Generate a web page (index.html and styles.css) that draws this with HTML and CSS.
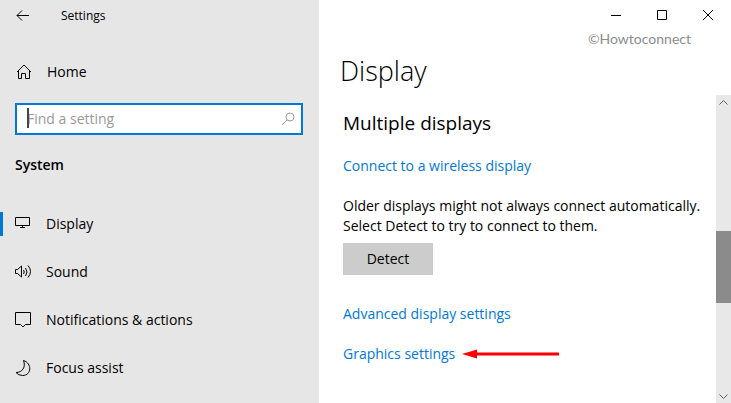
FILE: index.html
```
<!DOCTYPE html>
<html lang="en">
<head>
    <meta charset="UTF-8">
    <title>Settings</title>
    <link rel="stylesheet" href="styles.css">
</head>
<body>
<div class="window">
    <div class="sidebar">
        <div class="titlebar">
            <button class="back" aria-label="Back">
                <svg width="14" height="12" viewBox="0 0 14 12"><path d="M1 5.500h12M6 .5L1 5.500l5 5"/></svg>
            </button>
            <span class="caption">Settings</span>
        </div>
        <a class="item home" href="#">
            <svg width="16" height="16" viewBox="0 0 16 16"><path d="M1 8L8 1l7 7M2.500 7v7.500h3v-5h4v5h4V7"/></svg>
            <span>Home</span>
        </a>
        <div class="search">
            <input type="text" placeholder="Find a setting" aria-label="Find a setting">
            <span class="caret"></span>
            <svg width="14" height="14" viewBox="0 0 14 14"><circle cx="9" cy="5" r="4"/><path d="M6 8L1 13"/></svg>
        </div>
        <h2 class="group">System</h2>
        <div class="menu">
            <a class="item active" href="#">
                <svg width="16" height="16" viewBox="0 0 16 16"><path d="M.5 1.500h14v8H.5zM7.500 9.500v2M5 11.500h5"/></svg>
                <span>Display</span>
            </a>
            <a class="item" href="#">
                <svg width="18" height="16" viewBox="0 0 18 16"><path d="M.5 5.500h2L6.500 2v11l-4-3.500h-2zM8.500 6q1.500 2 0 4M10.500 4q3 4 0 8M13 1.500q5 6 0 12"/></svg>
                <span>Sound</span>
            </a>
            <a class="item" href="#">
                <svg width="16" height="16" viewBox="0 0 16 16"><path d="M.5 .5h15v12h-5L8 15l-2.500-2.500h-5z"/></svg>
                <span>Notifications &amp; actions</span>
            </a>
            <a class="item" href="#">
                <svg width="16" height="16" viewBox="0 0 16 16"><path d="M8.500 .5C17 3 17 15.500 7.500 15.500Q3.500 15.500 1 12.500C7.500 12.500 11 7 8.500 .5z"/></svg>
                <span>Focus assist</span>
            </a>
        </div>
    </div>
    <div class="main">
        <div class="controls">
            <button aria-label="Minimize"><svg width="10" height="10" viewBox="0 0 10 10"><path d="M0 5.500h10"/></svg></button>
            <button aria-label="Maximize"><svg width="10" height="10" viewBox="0 0 10 10"><path d="M.5 .5h9v9h-9z"/></svg></button>
            <button aria-label="Close"><svg width="10" height="10" viewBox="0 0 10 10"><path d="M0 0l10 10M10 0L0 10"/></svg></button>
        </div>
        <div class="credit">©Howtoconnect</div>
        <h1>Display</h1>
        <div class="pane">
            <div class="content">
                <h2>Multiple displays</h2>
                <a class="link" href="#">Connect to a wireless display</a>
                <p>Older displays might not always connect automatically. Select Detect to try to connect to them.</p>
                <button class="detect">Detect</button>
                <a class="link advanced" href="#">Advanced display settings</a>
                <div class="row">
                    <a class="link" href="#">Graphics settings</a>
                    <svg class="arrow" width="98" height="10" viewBox="0 0 98 10"><path d="M0 5L15 .5v9z"/><path d="M14 3.500h83v3H14z"/></svg>
                </div>
            </div>
            <div class="scrollbar">
                <svg width="9" height="5" viewBox="0 0 9 5"><path d="M.5 4.500l4-4 4 4"/></svg>
                <div class="track"><div class="thumb"></div></div>
                <svg width="9" height="5" viewBox="0 0 9 5"><path d="M.5 .5l4 4 4-4"/></svg>
            </div>
        </div>
    </div>
</div>
</body>
</html>
```
FILE: styles.css
```
*{
    margin: 0;
    padding: 0;
    box-sizing: border-box;
}
body{
    font: 14px/20px "Open Sans", "Noto Sans", sans-serif;
    color: #000;
    background: #fff;
}
a{
    color: inherit;
    text-decoration: none;
}
button{
    border: 0;
    background: none;
    font: inherit;
}
svg{
    display: block;
    flex: none;
    fill: none;
    stroke: #000;
}
.window{
    display: flex;
    height: 100vh;
    overflow: hidden;
}
.sidebar{
    flex: 0 0 319px;
    background: #e6e6e6;
}
.titlebar{
    display: flex;
    align-items: center;
    height: 32px;
}
.back{
    width: 45px;
    height: 28px;
    padding-left: 16px;
}
.caption{
    padding-left: 16px;
    font-size: 12px;
}
.item{
    display: flex;
    align-items: center;
    height: 48px;
    padding-left: 15px;
}
.item svg{
    margin-right: 15px;
}
.item svg[width="18"]{
    margin-right: 13px;
}
.home{
    height: 40px;
    margin-top: 20px;
    padding-left: 16px;
}
.search{
    position: relative;
    display: flex;
    align-items: center;
    height: 32px;
    margin: 11px 16px 0 15px;
    padding: 0 6px 0 10px;
    border: 2px solid #0078d7;
    background: #fff;
}
.search input{
    flex: 1;
    min-width: 0;
    border: 0;
    outline: 0;
    background: none;
    font: inherit;
}
.search input::placeholder{
    color: #999;
}
.search svg{
    stroke: #999;
}
.caret{
    position: absolute;
    left: 10px;
    top: 3px;
    width: 2px;
    height: 20px;
    background: #444;
}
.group{
    margin: 20px 0 0 15px;
    font-size: 14px;
    font-weight: 600;
}
.menu{
    padding-top: 25px;
}
.active{
    background: linear-gradient(#0078d7, #0078d7) 0 center / 3px 24px no-repeat;
}
.main{
    flex: 1;
    min-width: 0;
    display: flex;
    flex-direction: column;
}
.controls{
    display: flex;
    justify-content: flex-end;
    height: 30px;
}
.controls button{
    display: flex;
    align-items: center;
    justify-content: center;
    width: 46px;
}
.credit{
    padding-right: 40px;
    font: 14px/18px Lato, sans-serif;
    color: #8c8c8c;
    text-align: right;
}
h1{
    padding-left: 21px;
    font-size: 27px;
    line-height: 36px;
    font-weight: 300;
    margin: 5px 0 6px;
}
.pane{
    flex: 1;
    min-height: 0;
    display: flex;
}
.content{
    flex: 1;
    min-width: 0;
    padding: 14px 8px 0 24px;
}
.content h2{
    font-size: 19px;
    line-height: 28px;
    font-weight: 400;
}
.link{
    display: block;
    color: #0078d7;
}
.content h2 + .link{
    margin-top: 19px;
}
.content p{
    margin: 20px 0 7px;
}
.detect{
    width: 90px;
    height: 32px;
    background: #ccc;
}
.advanced{
    margin: 29px 0 20px;
}
.row{
    display: flex;
    align-items: center;
    gap: 7px;
}
.arrow{
    fill: #f00;
    stroke: none;
}
.scrollbar{
    flex: 0 0 15px;
    display: flex;
    flex-direction: column;
    align-items: center;
    padding: 5px 0 4px;
    background: #e8e8e8;
}
.scrollbar svg{
    stroke: #606060;
}
.track{
    flex: 1;
    width: 100%;
    padding-top: 126px;
}
.thumb{
    height: 72px;
    background: #8b8b8b;
}
```
